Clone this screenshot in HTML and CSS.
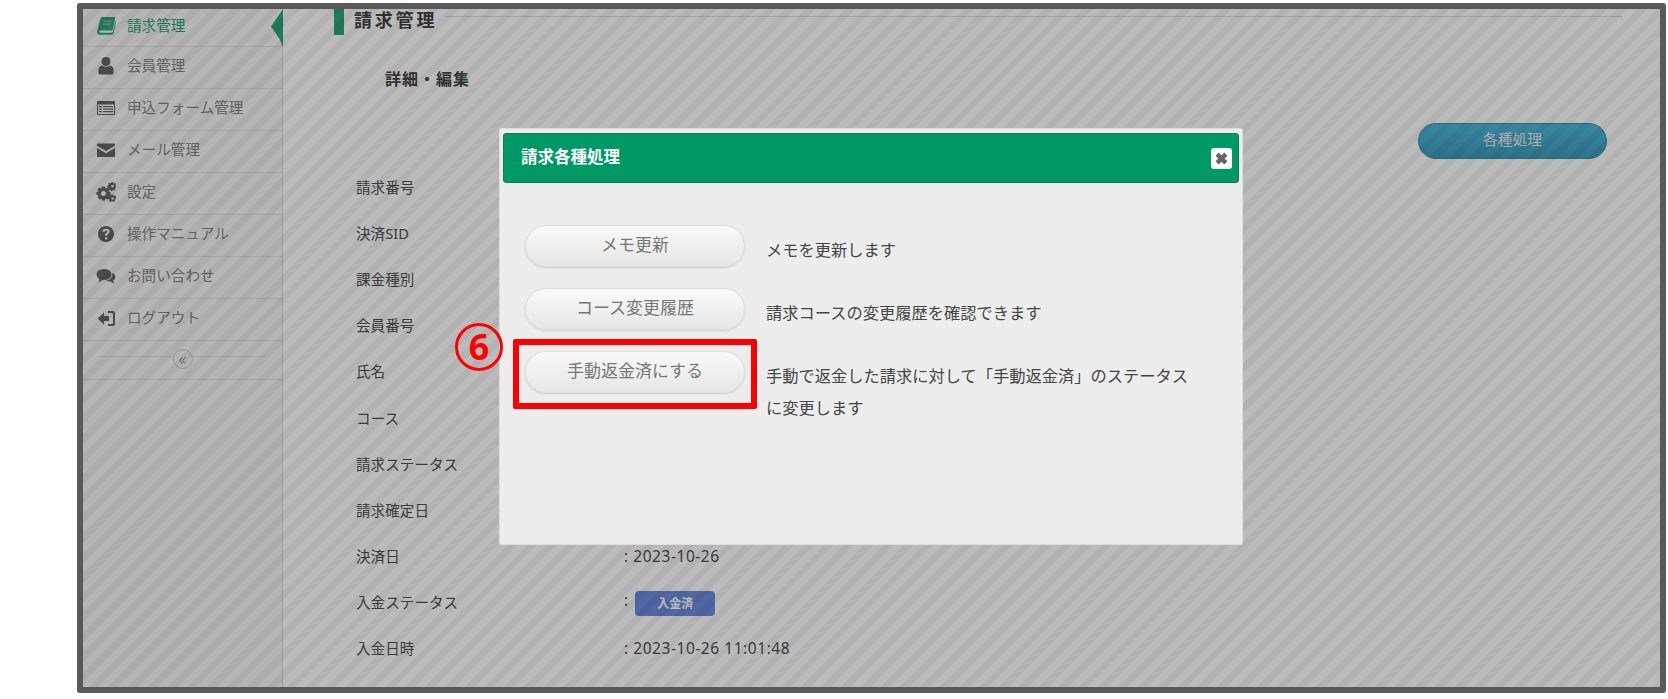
FILE: index.html
```html
<!DOCTYPE html>
<html lang="ja">
<head>
<meta charset="utf-8">
<title>請求管理</title>
<link rel="stylesheet" href="styles.css">
</head>
<body>
<div class="frame">
  <div class="app">
    <nav class="side">
      <a class="nav active"><svg class="ico" viewBox="0 0 20 20"><path fill="currentColor" d="M6 1h12.500q1 0 .8 1.200l-2.600 11.300q-.3 1-1.400 1H4.500q-1.500 0-1.200 1.300.2.900 1.400.9H16q.8 0 1-.8L19.300 5l.7.500-2.300 11.500q-.3 1.700-2 1.700H4q-3 0-2.800-3.500q0-.7.300-1.500L4.500 2.500Q5 1 6 1z"/><path fill="#b5b5b5" d="M7.500 4.500h8l-.3 1.200h-8zM6.800 7.500h8l-.3 1.200h-8z"/></svg>請求管理<i class="arrow"></i></a>
      <a class="nav"><svg class="ico" viewBox="0 0 20 20"><circle cx="10" cy="5.500" r="4.500" fill="currentColor"/><path fill="currentColor" d="M2.500 17v-3q0-4 3.500-4.500 4 2.500 8 0 3.500.5 3.500 4.500v3q0 1.500-2 1.500H4.500q-2 0-2-1.500z"/></svg>会員管理</a>
      <a class="nav"><svg class="ico" viewBox="0 0 20 20"><path fill="currentColor" fill-rule="evenodd" d="M1 3h18v14H1zM2 6.500V16h16V6.500zM3 8h3v1.300H3zM7 8h10v1.300H7zM3 10.500h3v1.300H3zM7 10.500h10v1.300H7zM3 13h3v1.300H3zM7 13h10v1.300H7z"/></svg>申込フォーム管理</a>
      <a class="nav"><svg class="ico" viewBox="0 0 20 20"><path fill="currentColor" d="M1 3.500h18v2.200l-9 5.300-9-5.300zM1 8l9 5.300L19 8v9H1z"/></svg>メール管理</a>
      <a class="nav"><svg class="ico" viewBox="0 0 20 20"><path fill="currentColor" fill-rule="evenodd" d="M6 4.500h3l.5 2 1.900-1 2.100 2.100-1 1.900 2 .5v3l-2 .5 1 1.900-2.100 2.100-1.900-1-.5 2H6l-.5-2-1.900 1-2.100-2.100 1-1.900-2-.5v-3l2-.5-1-1.900 2.100-2.100 1.900 1zM7.500 8.900a2.600 2.600 0 1 0 .01 0z"/><path fill="currentColor" fill-rule="evenodd" d="M15.800 0h1.400l.3 1.100 1 .5 1-.5.5 1-.7.9.3.9 1 .4-.1 1.400-1.100.2-.5 1 .5 1-1 .7-.9-.7-1 .3-.3 1h-1.200l-.3-1-1-.4-.9.6-.9-.9.6-.9-.4-1-1-.3V3.900l1-.3.4-1-.5-.9.9-.9.9.5 1-.4zM16.500 2.900a1.300 1.300 0 1 0 .01 0z"/><path fill="currentColor" fill-rule="evenodd" d="M16 12.500h1.300l.3 1 1 .4.9-.5.9.9-.5.9.1.9-.1 1.100-.9-.2-.4 1 .5.900-.9.9-.9-.5-1 .4-.3 1H16l-.3-1-1-.4-.9.5-.9-.9.5-.9-.4-1-1-.3v-1.200l1-.3.4-1-.5-.9.9-.9.9.5 1-.4zM16.600 15.300a1.200 1.200 0 1 0 .01 0z"/></svg>設定</a>
      <a class="nav"><svg class="ico" viewBox="0 0 20 20"><path fill="currentColor" fill-rule="evenodd" d="M10 2a8 8 0 1 0 .01 0zM9 13.200h2.300v2.200H9zM6.300 7.500Q6.800 4.700 10 4.700q3.600 0 3.700 2.900 0 1.600-1.700 2.600-.8.500-.7 1.600H9q-.2-2 1-2.800 1.300-.8 1.300-1.400 0-1-1.300-1-1 0-1.400 1.200z"/></svg>操作マニュアル</a>
      <a class="nav"><svg class="ico" viewBox="0 0 20 20"><path fill="currentColor" d="M8 3c4 0 7.500 2.200 7.500 5.500S12 14 8 14l-1.500-.1Q4.500 15.500 2 16q1-1 1.300-3Q.5 11.200.5 8.500C.5 5.200 4 3 8 3z"/><path fill="currentColor" d="M16.500 6.800q3 1.600 3 4.200 0 2.200-2.300 3.700.3 1.600 1.300 2.800-2.500-.5-4-2-2.500.2-4.500-.7 6.500-.6 6.500-8z"/></svg>お問い合わせ</a>
      <a class="nav"><svg class="ico" viewBox="0 0 20 20"><path fill="currentColor" d="M1.500 10.500 8 4.500v3.500h5v5H8v3.500z"/><path fill="currentColor" d="M12 3h4.500q2.500 0 2.500 2.500v10q0 2.500-2.500 2.500H12v-2h4q1 0 1-1V6q0-1-1-1h-4z"/></svg>ログアウト</a>
      <div class="collapse"><span class="chev">«</span></div>
    </nav>
    <main class="main">
      <h1 class="title">請求管理</h1>
      <h2 class="sub">詳細・編集</h2>
      <div class="tools"><span class="btn-blue">各種処理</span></div>
      <dl class="rows">
        <div class="row"><dt>請求番号</dt><dd></dd></div>
        <div class="row"><dt>決済SID</dt><dd></dd></div>
        <div class="row"><dt>課金種別</dt><dd></dd></div>
        <div class="row"><dt>会員番号</dt><dd></dd></div>
        <div class="row"><dt>氏名</dt><dd></dd></div>
        <div class="row"><dt>コース</dt><dd></dd></div>
        <div class="row"><dt>請求ステータス</dt><dd></dd></div>
        <div class="row"><dt>請求確定日</dt><dd></dd></div>
        <div class="row"><dt>決済日</dt><dd>: 2023-10-26</dd></div>
        <div class="row"><dt>入金ステータス</dt><dd>: <span class="badge">入金済</span></dd></div>
        <div class="row"><dt>入金日時</dt><dd>: 2023-10-26 11:01:48</dd></div>
      </dl>
    </main>
    <div class="stripes"></div>
    <section class="modal">
      <header class="m-head"><span>請求各種処理</span><span class="close"><svg viewBox="0 0 12 12" class="x"><path d="M2.500 2.500l7 7M9.500 2.500l-7 7"/></svg></span></header>
      <div class="m-body">
        <div class="m-row"><span class="pill">メモ更新</span><p>メモを更新します</p></div>
        <div class="m-row"><span class="pill">コース変更履歴</span><p>請求コースの変更履歴を確認できます</p></div>
        <div class="m-row"><span class="pill">手動返金済にする</span><p>手動で返金した請求に対して「手動返金済」のステータスに変更します</p></div>
      </div>
    </section>
  </div>
  <div class="mark"></div>
  <div class="num">6</div>
</div>
</body>
</html>
```
FILE: styles.css
```css
* { box-sizing: border-box; }
html, body { margin: 0; padding: 0; background: #fff; }
body { font-family: "Noto Sans CJK JP", "Noto Sans", sans-serif; width: 1668px; height: 699px; overflow: hidden; position: relative; }
.frame { position: absolute; left: 77px; top: 3px; width: 1589px; height: 690px; border: 6px solid #595959; border-radius: 3px; }
.app { position: relative; width: 100%; height: 100%; display: flex; background: #fff; }
.side { width: 200px; flex: none; border-right: 1px solid #d9d9d9; background: #f7f7f7; }
.nav { display: flex; align-items: center; height: 42px; padding: 0 0 7px 13px; font-size: 14.600px; color: #888; border-bottom: 1px solid #e2e2e2; position: relative; }
.nav:first-child { height: 38px; color: #2aa876; }
.ico { width: 20px; height: 20px; margin: 3px 11px 0 0; flex: none; color: #666; }
.active .ico { color: #2aa876; }
.arrow { position: absolute; right: -1px; top: 0; height: 38px; width: 12px; background: #2aa876; clip-path: polygon(100% 0, 100% 100%, 70% 78%, 0 46%); }
.collapse { height: 39px; position: relative; border-bottom: 1px solid #e2e2e2; display: flex; justify-content: center; align-items: center; }
.collapse::before { content: ""; position: absolute; left: 16px; right: 16px; top: 15px; border-top: 1px solid #e2e2e2; }
.chev { position: relative; width: 20px; height: 20px; border-radius: 50%; border: 1px solid #ccc; background: #f7f7f7; color: #999; font-size: 17px; line-height: 15px; text-align: center; margin-top: -3px; }
.main { flex: 1; padding-left: 51px; position: relative; }
.title { margin: 0; height: 26px; border-left: 10px solid #2aa876; padding-left: 10px; font-size: 18px; line-height: 20px; font-weight: 700; color: #444; letter-spacing: 2.800px; display: flex; }
.title::after { content: ""; flex: 1; margin: 7px 37px 0 8px; height: 1px; background: #ddd; }
.sub { margin: 32px 0 0 51px; font-size: 16px; letter-spacing: 1px; line-height: 22px; font-weight: 700; color: #444; }
.tools { display: flex; justify-content: flex-end; padding-right: 53px; margin-top: 34px; }
.btn-blue { width: 189px; height: 36px; border-radius: 18px; background: linear-gradient(#4db9dc, #3d9dbd); border: 1px solid #3a8fae; color: #eee; font-size: 14.700px; line-height: 30px; text-align: center; }
.rows { margin: 0; padding-top: 4px; }
.row { display: flex; height: 46.2px; align-items: center; font-size: 14.600px; color: #505050; font-family: "Noto Sans", "Noto Sans CJK JP", sans-serif; }
.row dt { width: 290px; padding-left: 22px; margin-left: 0; }
.row dd { margin: 0; white-space: pre; font-size: 15.500px; letter-spacing: .55px; }
.badge { display: inline-block; width: 80px; height: 25px; margin: 4px 0 0 2px; border-radius: 4px; background: #6f8de0; color: #fff; font-family: "Noto Sans CJK JP", sans-serif; font-size: 12px; font-weight: 700; line-height: 24px; letter-spacing: 0; text-align: center; vertical-align: middle; }
.stripes { position: absolute; inset: 0; background: repeating-linear-gradient(135deg, rgba(0,0,0,.265) 0 7px, rgba(0,0,0,.3) 7px 14px); }
.modal { position: absolute; left: 417px; top: 120px; width: 742px; height: 415px; background: #ededed; padding: 4px 3px; border-radius: 2px; box-shadow: 0 0 0 1px #ddd; }
.m-head { height: 50px; background: #009966; border: 1px solid #0a7f57; border-radius: 3px; display: flex; align-items: center; justify-content: space-between; padding: 0 6px 4px 17px; color: #fff; font-size: 16.500px; font-weight: 700; }
.close { width: 21px; height: 21px; margin-top: 4px; background: #fff; border-radius: 3px; display: flex; align-items: center; justify-content: center; }
.x { width: 15px; height: 15px; stroke: #666; stroke-width: 3.500; fill: none; }
.m-body { padding: 42px 0 0 22px; }
.m-row { display: flex; align-items: flex-start; margin-bottom: 21px; }
.pill { flex: none; width: 220px; height: 42px; border-radius: 21px; border: 1px solid #ddd; background: linear-gradient(#fafafa, #e6e6e6); box-shadow: 0 1px 2px #ccc; font-size: 17px; color: #777; line-height: 35px; text-align: center; }
.m-row p { margin: 8px 0 0 21px; width: 425px; font-size: 16.250px; line-height: 32px; color: #444; }
.mark { position: absolute; left: 430px; top: 330px; width: 244px; height: 70px; border: 6px solid #f00; border-radius: 2px; }
.num { position: absolute; left: 372px; top: 314px; width: 48px; height: 48px; border: 3px solid #f00; border-radius: 50%; color: #f00; font-family: "Noto Sans", sans-serif; font-size: 36px; font-weight: 700; line-height: 42px; text-align: center; }
```
